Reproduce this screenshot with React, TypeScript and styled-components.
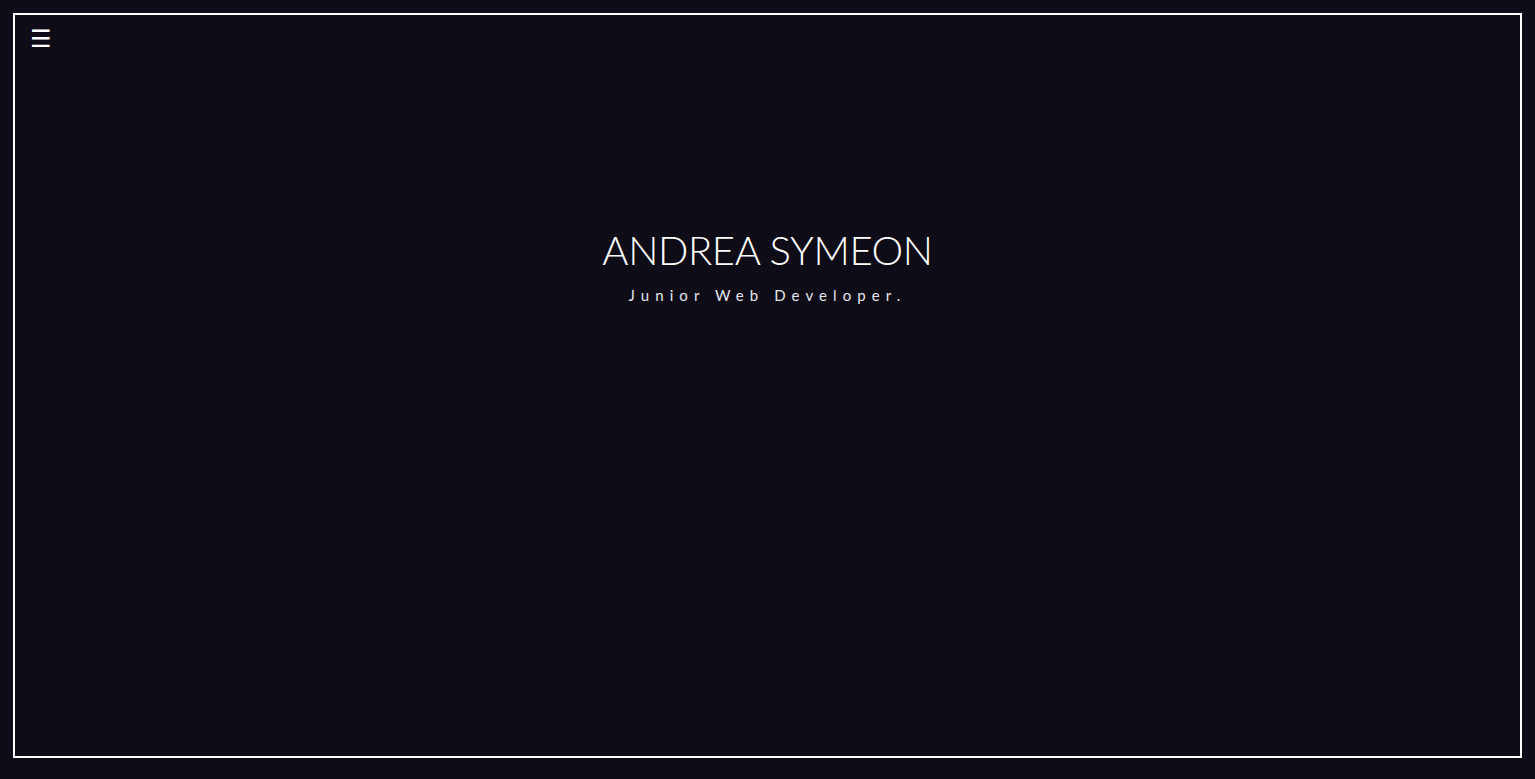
import React from "react";
import styled, { createGlobalStyle } from "styled-components";

const Global = createGlobalStyle`
  html, body { margin: 0; padding: 0; background: #0e0c16; }
  body { font-family: "Lato", sans-serif; color: #fff; }
`;

const Page = styled.div`
  padding: 13px 13px 21px 13px;
`;

const Frame = styled.div`
  box-sizing: border-box;
  height: 745px;
  border: 2px solid #ffffff;
  display: flex;
  flex-direction: column;
`;

const Bar = styled.header`
  display: flex;
  align-items: center;
  padding: 8px 0 0 15px;
  height: 32px;
`;

const MenuButton = styled.button`
  background: none;
  border: none;
  color: #fff;
  font-family: "DejaVu Sans", sans-serif;
  font-size: 24px;
  line-height: 1;
  padding: 0;
  cursor: pointer;
`;

const Hero = styled.section`
  display: flex;
  flex-direction: column;
  align-items: center;
  padding-top: 170px;
`;

const Title = styled.h1`
  margin: 0;
  font-family: "Lato", sans-serif;
  font-weight: 300;
  font-size: 40px;
  line-height: 50px;
  letter-spacing: -0.4px;
  color: #fff;
`;

const Subtitle = styled.p`
  margin: 11px 0 0 0;
  font-family: "Lato", sans-serif;
  font-weight: 400;
  font-size: 15px;
  letter-spacing: 6.1px;
  color: #e6e6ee;
`;

export default function App() {
  return (
    <>
      <Global />
      <Page>
        <Frame>
          <Bar>
            <MenuButton aria-label="menu">☰</MenuButton>
          </Bar>
          <Hero>
            <Title>ANDREA SYMEON</Title>
            <Subtitle>Junior Web Developer.</Subtitle>
          </Hero>
        </Frame>
      </Page>
    </>
  );
}
